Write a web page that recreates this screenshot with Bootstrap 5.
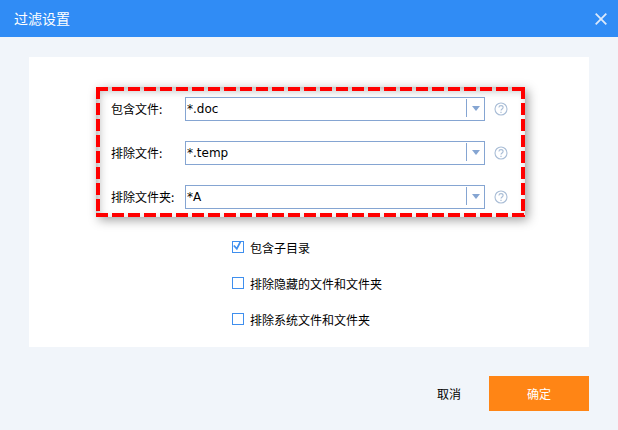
<!DOCTYPE html>
<html lang="zh-CN">

<head>
    <meta charset="UTF-8">
    <meta name="viewport" content="width=device-width, initial-scale=1.0">
    <title>过滤设置</title>
    <link href="https://cdn.jsdelivr.net/npm/bootstrap@5.3.0/dist/css/bootstrap.min.css" rel="stylesheet">
    <style>
        html, body { height: 100%; }
        body {
            background: #f1f5fa;
            color: #000;
            font-family: "Noto Sans CJK SC", "DejaVu Sans", sans-serif;
            font-size: 12px;
            overflow: hidden;
        }
        .title-bar { height: 37px; background: #308cf5; color: #fff; padding: 0 11px 0 14px; }
        .title-text { font-size: 14px; }
        .close-x { background: none; border: 0; padding: 0; line-height: 0; }
        .filter-panel { margin: 20px 29px 0; height: 290px; padding: 30px 0 0 67px; background: #fff; }
        .dash-frame {
            position: relative;
            width: 429px;
            height: 130px;
            padding: 10px 0 0 15px;
            box-shadow: 3px 3px 10px rgba(0, 0, 0, .38), inset 3px 3px 10px rgba(0, 0, 0, .3);
        }
        /* dashes sit on top so the inset shadow does not darken the red */
        .dash-frame::after {
            content: "";
            position: absolute;
            inset: 0;
            pointer-events: none;
            background:
                repeating-linear-gradient(90deg, #f00 0 12px, transparent 12px 16px) 0 0 / 100% 4px no-repeat,
                repeating-linear-gradient(90deg, #f00 0 12px, transparent 12px 16px) 0 100% / 100% 4px no-repeat,
                repeating-linear-gradient(180deg, #f00 0 12px, transparent 12px 16px) 0 0 / 4px 100% no-repeat,
                repeating-linear-gradient(180deg, #f00 0 12px, transparent 12px 16px) 100% 0 / 4px 100% no-repeat;
        }
        .filter-row { height: 24px; margin-bottom: 20px; }
        .filter-label { width: 74px; line-height: 24px; }
        .combo-box { width: 300px; height: 24px; border: 1px solid #85a5d2; background: #fff; }
        .combo-box .form-control {
            height: 22px;
            min-height: 0;
            padding: 0 1px;
            border: 0;
            border-radius: 0;
            box-shadow: none;
            color: #000;
            font-family: "DejaVu Sans", sans-serif;
            font-size: 12px;
        }
        .combo-arrow { width: 18px; height: 18px; margin: 1px 0 0; border-left: 1px solid #85a5d2; }
        .help-mark { margin-left: 9px; }
        .check-list { margin: 13px 0 0 136px; }
        .check-item { height: 36px; }
        .check-item .form-check-input {
            appearance: none;
            width: 12px;
            height: 12px;
            margin: -2px 6px 0 0;
            border: 1px solid #3f8fee;
            border-radius: 0;
            background-color: #fff;
            box-shadow: none;
        }
        .check-item .form-check-input:checked {
            background-color: #fff;
            border-color: #3f8fee;
            background-image: url("data:image/svg+xml,%3csvg xmlns='http://www.w3.org/2000/svg' viewBox='0 0 12 12'%3e%3cpath fill='none' stroke='%233f8fee' stroke-width='1.8' d='M1.8 4.5 4.8 7.8 8.8 0'/%3e%3c/svg%3e");
            background-size: 12px 12px;
        }
        .check-item .form-check-label { line-height: 1; margin-top: -1px; }
        .dialog-foot { margin: 29px 29px 0 0; }
        .btn-cancel, .btn-ok { height: 35px; border: 0; border-radius: 0; font-size: 12px; padding: 0; }
        .btn-cancel { width: 80px; background: none; color: #000; }
        .btn-ok { width: 100px; background: #ff8515; color: #fff; }
    </style>
</head>

<body>
    <div class="title-bar d-flex align-items-center justify-content-between">
        <span class="title-text">过滤设置</span>
        <button type="button" class="close-x" aria-label="关闭">
            <svg width="12" height="12" viewBox="0 0 12 12"><path d="M.7.7l10.6 10.6M11.3.7.7 11.3" fill="none" stroke="#dbe9fb" stroke-width="1.8"/></svg>
        </button>
    </div>

    <div class="filter-panel">
        <div class="dash-frame">
            <div class="filter-row d-flex align-items-center">
                <label class="filter-label">包含文件:</label>
                <div class="combo-box d-flex">
                    <input class="form-control" type="text" value="*.doc">
                    <span class="combo-arrow flex-shrink-0 d-flex align-items-center justify-content-center">
                        <svg width="8" height="5" viewBox="0 0 8 5"><path d="M0 0h8L4 5z" fill="#85a5d2"/></svg>
                    </span>
                </div>
                <svg class="help-mark" width="14" height="14" viewBox="0 0 14 14"><circle cx="7" cy="7" r="6" fill="none" stroke="#a9bdd6" stroke-width="1.1"/><path d="M4.9 5.4C5 3 9.1 3 9.1 5.4 9.1 6.9 7 7 7 8.6" fill="none" stroke="#a9bdd6" stroke-width="1.1"/><path d="M6.4 9.8h1.2V11H6.4z" fill="#a9bdd6"/></svg>
            </div>
            <div class="filter-row d-flex align-items-center">
                <label class="filter-label">排除文件:</label>
                <div class="combo-box d-flex">
                    <input class="form-control" type="text" value="*.temp">
                    <span class="combo-arrow flex-shrink-0 d-flex align-items-center justify-content-center">
                        <svg width="8" height="5" viewBox="0 0 8 5"><path d="M0 0h8L4 5z" fill="#85a5d2"/></svg>
                    </span>
                </div>
                <svg class="help-mark" width="14" height="14" viewBox="0 0 14 14"><circle cx="7" cy="7" r="6" fill="none" stroke="#a9bdd6" stroke-width="1.1"/><path d="M4.9 5.4C5 3 9.1 3 9.1 5.4 9.1 6.9 7 7 7 8.6" fill="none" stroke="#a9bdd6" stroke-width="1.1"/><path d="M6.4 9.8h1.2V11H6.4z" fill="#a9bdd6"/></svg>
            </div>
            <div class="filter-row d-flex align-items-center">
                <label class="filter-label">排除文件夹:</label>
                <div class="combo-box d-flex">
                    <input class="form-control" type="text" value="*A">
                    <span class="combo-arrow flex-shrink-0 d-flex align-items-center justify-content-center">
                        <svg width="8" height="5" viewBox="0 0 8 5"><path d="M0 0h8L4 5z" fill="#85a5d2"/></svg>
                    </span>
                </div>
                <svg class="help-mark" width="14" height="14" viewBox="0 0 14 14"><circle cx="7" cy="7" r="6" fill="none" stroke="#a9bdd6" stroke-width="1.1"/><path d="M4.9 5.4C5 3 9.1 3 9.1 5.4 9.1 6.9 7 7 7 8.6" fill="none" stroke="#a9bdd6" stroke-width="1.1"/><path d="M6.4 9.8h1.2V11H6.4z" fill="#a9bdd6"/></svg>
            </div>
        </div>

        <div class="check-list">
            <div class="check-item d-flex align-items-center">
                <input class="form-check-input" type="checkbox" id="subDirs" checked>
                <label class="form-check-label" for="subDirs">包含子目录</label>
            </div>
            <div class="check-item d-flex align-items-center">
                <input class="form-check-input" type="checkbox" id="skipHidden">
                <label class="form-check-label" for="skipHidden">排除隐藏的文件和文件夹</label>
            </div>
            <div class="check-item d-flex align-items-center">
                <input class="form-check-input" type="checkbox" id="skipSystem">
                <label class="form-check-label" for="skipSystem">排除系统文件和文件夹</label>
            </div>
        </div>
    </div>

    <div class="dialog-foot d-flex justify-content-end">
        <button type="button" class="btn btn-cancel">取消</button>
        <button type="button" class="btn btn-ok">确定</button>
    </div>

    <script src="https://cdn.jsdelivr.net/npm/bootstrap@5.3.0/dist/js/bootstrap.bundle.min.js"></script>
</body>

</html>
